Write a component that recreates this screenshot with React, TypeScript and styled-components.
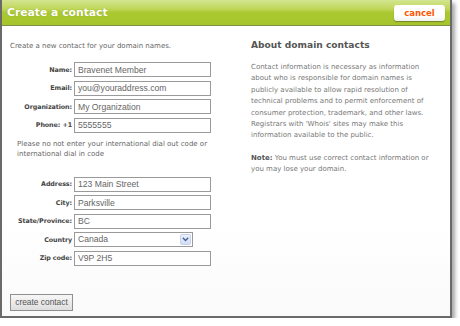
import styled, {createGlobalStyle} from 'styled-components';

const GlobalStyle = createGlobalStyle`
  html, body {
    margin: 0;
    padding: 0;
    background: #fff;
  }
`;

const Window = styled.div`
  box-sizing: border-box;
  width: 452px;
  height: 318px;
  border: 2px solid #6a6a6a;
  border-top: none;
  background: linear-gradient(#fff 70%, #fafafa);
  box-shadow: 3px 3px 4px rgba(0, 0, 0, 0.35);
  display: flex;
  flex-direction: column;
  font-family: 'DejaVu Sans', Verdana, sans-serif;
`;

const Header = styled.div`
  box-sizing: border-box;
  height: 26px;
  padding: 0 5px 0 5px;
  display: flex;
  align-items: center;
  justify-content: space-between;
  border-bottom: 1px solid #7e8f4a;
  background: linear-gradient(#d3e592 0%, #c0d75a 35%, #aac831 50%, #a6c42a 100%);
`;

const Title = styled.h1`
  margin: 0;
  font-size: 10.8px;
  font-weight: bold;
  color: #fff;
  text-shadow: 0 0 1px rgba(80, 100, 20, 0.4);
`;

const CancelButton = styled.button`
  box-sizing: border-box;
  width: 51px;
  height: 16px;
  margin-top: 1px;
  border: none;
  border-radius: 3px;
  background: linear-gradient(#fff 60%, #f1f1f1);
  box-shadow: 0 1px 1px rgba(60, 70, 20, 0.5);
  font-family: 'DejaVu Sans', Verdana, sans-serif;
  font-size: 8.5px;
  font-weight: bold;
  color: #ff5400;
  padding: 0;
  cursor: pointer;
`;

const Body = styled.div`
  flex: 1;
  display: grid;
  grid-template-columns: 239px 1fr;
  padding: 15px 0 0 8px;
`;

const LeftColumn = styled.div`
  display: flex;
  flex-direction: column;
`;

const Text = styled.p<{$indent?: number}>`
  margin: 0;
  padding-left: ${p => p.$indent ?? 0}px;
  font-size: 7px;
  line-height: 11px;
  color: #666;
  white-space: nowrap;
`;

const Note = styled(Text)`
  margin-top: 6px;
  line-height: 10px;
`;

const Fields = styled.div<{$top: number}>`
  display: flex;
  flex-direction: column;
  gap: 3.5px;
  margin-top: ${p => p.$top}px;
`;

const Row = styled.div`
  display: flex;
  align-items: center;
  height: 15px;
`;

const Label = styled.label`
  width: 62px;
  margin-right: 2px;
  text-align: right;
  font-size: 6.4px;
  letter-spacing: -0.1px;
  font-weight: bold;
  color: #444;
  white-space: nowrap;
`;

const TextInput = styled.input`
  box-sizing: border-box;
  width: 137px;
  height: 15px;
  margin: 0;
  padding: 0 3px;
  border: 1px solid #9a9a9a;
  background: #fff;
  font-family: 'Liberation Sans', Arial, sans-serif;
  font-size: 8.6px;
  color: #666;
  outline: none;
`;

const SelectWrap = styled.div`
  position: relative;
  width: 119px;
  height: 15px;
`;

const Select = styled.select`
  display: block;
  box-sizing: border-box;
  width: 119px;
  height: 15px;
  min-height: 0;
  margin: 0;
  padding: 0 0 0 3px;
  border: 1px solid #9a9a9a;
  border-radius: 0;
  background: #fff;
  appearance: none;
  font-family: 'Liberation Sans', Arial, sans-serif;
  font-size: 8.6px;
  line-height: 13px;
  color: #666;
  outline: none;
`;

const SelectArrow = styled.span`
  position: absolute;
  top: 2px;
  right: 2px;
  width: 11px;
  height: 11px;
  box-sizing: border-box;
  border: 1px solid #c4d2ee;
  border-radius: 2px;
  background: linear-gradient(#edf2fd, #d2ddf6);
  display: flex;
  align-items: center;
  justify-content: center;
  pointer-events: none;
`;

const SubmitButton = styled.button`
  box-sizing: border-box;
  width: 63px;
  height: 17px;
  margin-top: 28px;
  padding: 0;
  border: 1px solid #8f8f8f;
  background: linear-gradient(#f7f7f7, #dedede);
  font-family: 'Liberation Sans', Arial, sans-serif;
  font-size: 8.4px;
  color: #555;
  cursor: pointer;
`;

const RightColumn = styled.div`
  padding-left: 2px;
`;

const Heading = styled.h2`
  margin: -1px 0 0;
  font-size: 9.1px;
  line-height: 11px;
  font-weight: bold;
  color: #555;
`;

const Info = styled.p<{$top: number}>`
  margin: ${p => p.$top}px 0 0;
  font-size: 7px;
  line-height: 11.4px;
  color: #777;
  white-space: nowrap;

  strong {
    color: #555;
  }
`;

const contactFields = [
  {label: 'Name:', value: 'Bravenet Member'},
  {label: 'Email:', value: 'you@youraddress.com'},
  {label: 'Organization:', value: 'My Organization'},
  {label: 'Phone: +1', value: '5555555'},
];

const addressFields = [
  {label: 'Address:', value: '123 Main Street'},
  {label: 'City:', value: 'Parksville'},
  {label: 'State/Province:', value: 'BC'},
];

const aboutLines = [
  'Contact information is necessary as information',
  'about who is responsible for domain names is',
  'publicly available to allow rapid resolution of',
  'technical problems and to permit enforcement of',
  'consumer protection, trademark, and other laws.',
  "Registrars with 'Whois' sites may make this",
  'information available to the public.',
];

export default function App() {
  return (
    <>
      <GlobalStyle />
      <Window>
        <Header>
          <Title>Create a contact</Title>
          <CancelButton>cancel</CancelButton>
        </Header>

        <Body>
          <LeftColumn>
            <Text>Create a new contact for your domain names.</Text>

            <Fields $top={10}>
              {contactFields.map(f => (
                <Row key={f.label}>
                  <Label>{f.label}</Label>
                  <TextInput defaultValue={f.value} />
                </Row>
              ))}
            </Fields>

            <Note $indent={7}>
              Please no not enter your international dial out code or
              <br />
              international dial in code
            </Note>

            <Fields $top={18}>
              {addressFields.map(f => (
                <Row key={f.label}>
                  <Label>{f.label}</Label>
                  <TextInput defaultValue={f.value} />
                </Row>
              ))}
              <Row>
                <Label>Country</Label>
                <SelectWrap>
                  <Select defaultValue="Canada">
                    <option>Canada</option>
                    <option>United States</option>
                  </Select>
                  <SelectArrow>
                    <svg width="7" height="5" viewBox="0 0 7 5">
                      <path d="M0.8 0.8 L3.5 3.6 L6.2 0.8" fill="none" stroke="#4a5f8c" strokeWidth="1.4" />
                    </svg>
                  </SelectArrow>
                </SelectWrap>
              </Row>
              <Row>
                <Label>Zip code:</Label>
                <TextInput defaultValue="V9P 2H5" />
              </Row>
            </Fields>

            <div>
              <SubmitButton>create contact</SubmitButton>
            </div>
          </LeftColumn>

          <RightColumn>
            <Heading>About domain contacts</Heading>
            <Info $top={11}>
              {aboutLines.map(line => (
                <span key={line}>
                  {line}
                  <br />
                </span>
              ))}
            </Info>
            <Info $top={11}>
              <strong>Note:</strong> You must use correct contact information or
              <br />
              you may lose your domain.
            </Info>
          </RightColumn>
        </Body>
      </Window>
    </>
  );
}
